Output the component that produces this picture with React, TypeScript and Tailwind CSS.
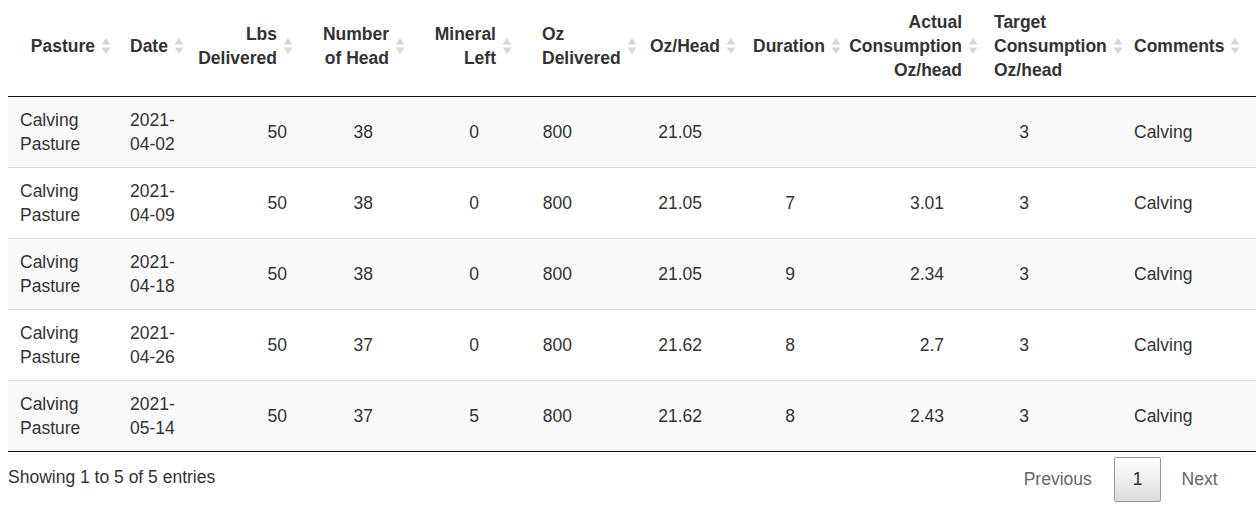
type Align = "left" | "right";

const SortIcon = () => (
  <svg width="10" height="18" viewBox="0 0 10 18" className="shrink-0">
    <path d="M5 1 L9.5 7.5 H0.5 Z" fill="#d6d6d6" />
    <path d="M5 17 L9.5 10.5 H0.5 Z" fill="#d6d6d6" />
  </svg>
);

const headers: { lines: string[]; align: Align; pad: string }[] = [
  { lines: ["Pasture"], align: "right", pad: "pr-[7px]" },
  { lines: ["Date"], align: "left", pad: "pl-[12px]" },
  { lines: ["Lbs", "Delivered"], align: "right", pad: "pr-[6px]" },
  { lines: ["Number", "of Head"], align: "right", pad: "pr-[6px]" },
  { lines: ["Mineral", "Left"], align: "right", pad: "pr-[6px]" },
  { lines: ["Oz", "Delivered"], align: "left", pad: "pl-[24px]" },
  { lines: ["Oz/Head"], align: "left", pad: "pl-[8px]" },
  { lines: ["Duration"], align: "left", pad: "pl-[10px]" },
  { lines: ["Actual", "Consumption", "Oz/head"], align: "right", pad: "pr-[6px]" },
  { lines: ["Target", "Consumption", "Oz/head"], align: "left", pad: "pl-[10px]" },
  { lines: ["Comments"], align: "left", pad: "pl-[8px]" },
];

const rows = [
  { date: "04-02", lbs: 50, head: 38, left: 0, oz: 800, ozHead: "21.05", dur: "", actual: "", target: 3 },
  { date: "04-09", lbs: 50, head: 38, left: 0, oz: 800, ozHead: "21.05", dur: "7", actual: "3.01", target: 3 },
  { date: "04-18", lbs: 50, head: 38, left: 0, oz: 800, ozHead: "21.05", dur: "9", actual: "2.34", target: 3 },
  { date: "04-26", lbs: 50, head: 37, left: 0, oz: 800, ozHead: "21.62", dur: "8", actual: "2.7", target: 3 },
  { date: "05-14", lbs: 50, head: 37, left: 5, oz: 800, ozHead: "21.62", dur: "8", actual: "2.43", target: 3 },
];

export default function App() {
  return (
    <div className="w-[1256px] h-[519px] overflow-hidden bg-white pl-2 font-['Liberation_Sans',Arial,sans-serif] text-[17.5px] leading-[24px] text-[#333]">
      {/* head */}
      <div className="grid grid-cols-[110px_70px_111px_112px_107px_124px_101px_103px_138px_142px_1fr] h-[97px] border-b border-[#111] font-bold">
        {headers.map((h, i) => (
          <div
            key={i}
            className={`flex items-center pt-[10px] pb-[14px] gap-[6px] ${h.align === "right" ? "justify-end" : "justify-start"} ${h.pad}`}
          >
            <div className={`whitespace-nowrap ${h.align === "right" ? "text-right" : "text-left"}`}>
              {h.lines.map((l, j) => (
                <div key={j}>{l}</div>
              ))}
            </div>
            <SortIcon />
          </div>
        ))}
      </div>

      {/* body */}
      {rows.map((r, i) => (
        <div
          key={i}
          className={`grid grid-cols-[110px_69px_112px_86px_106px_93px_130px_93px_149px_85px_1fr] items-center h-[71px] pb-[1px] border-b ${
            i === rows.length - 1 ? "border-[#111]" : "border-[#ddd]"
          } ${i % 2 === 0 ? "bg-[#f9f9f9]" : "bg-white"}`}
        >
          <div className="pl-3">
            Calving
            <br />
            Pasture
          </div>
          <div className="pl-3">
            2021-
            <br />
            {r.date}
          </div>
          <div className="pr-3 text-right">{r.lbs}</div>
          <div className="pr-3 text-right">{r.head}</div>
          <div className="pr-3 text-right">{r.left}</div>
          <div className="pr-3 text-right">{r.oz}</div>
          <div className="pr-3 text-right">{r.ozHead}</div>
          <div className="pr-3 text-right">{r.dur}</div>
          <div className="pr-3 text-right">{r.actual}</div>
          <div className="pr-3 text-right">{r.target}</div>
          <div className="pl-[93px]">Calving</div>
        </div>
      ))}

      {/* footer */}
      <div className="flex justify-between items-start pr-[20px]">
        <div className="pt-[13px]">Showing 1 to 5 of 5 entries</div>
        <div className="flex gap-[2px] pt-[5px]">
          <span className="pl-[17.5px] pr-[19.5px] pt-[8.5px] pb-[10px] border border-transparent text-[#666]">Previous</span>
          <span className="px-[17.5px] pt-[8.5px] pb-[10px] border border-[#979797] rounded-[2px] bg-gradient-to-b from-white to-[#dcdcdc] text-[#333]">
            1
          </span>
          <span className="px-[17.5px] pt-[8.5px] pb-[10px] border border-transparent text-[#666]">Next</span>
        </div>
      </div>
    </div>
  );
}
